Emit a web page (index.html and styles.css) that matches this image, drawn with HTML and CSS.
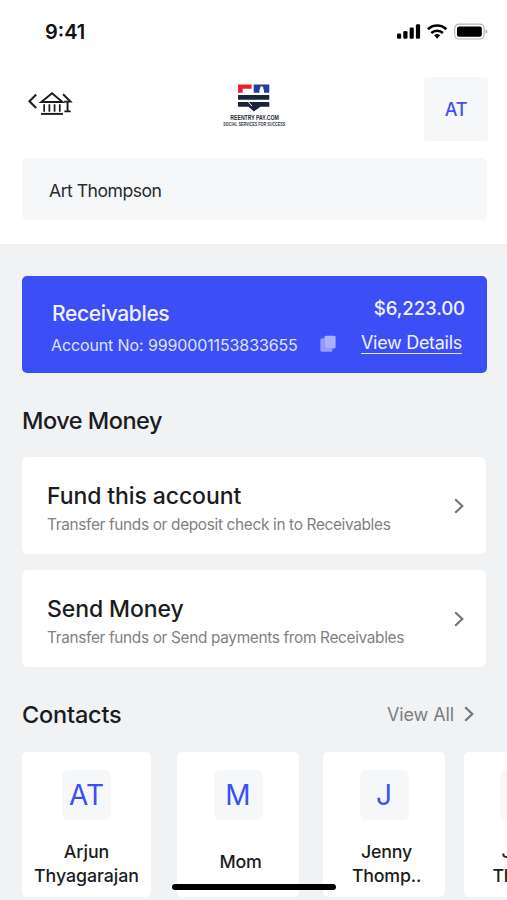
FILE: index.html
```html
<!DOCTYPE html>
<html lang="en">
<head>
<meta charset="utf-8">
<title>Reentry Pay</title>
<link rel="stylesheet" href="styles.css">
</head>
<body>
<div class="screen">
  <header class="top">
    <div class="status">
      <span class="time">9:41</span>
      <svg class="status-icons" width="92" height="20" viewBox="0 0 92 20">
        <rect x="0" y="11.5" width="4.2" height="5.2" rx="1.3"/>
        <rect x="6.3" y="9" width="4.2" height="7.7" rx="1.3"/>
        <rect x="12.6" y="5.5" width="4.2" height="11.2" rx="1.3"/>
        <rect x="18.9" y="2.2" width="4.2" height="14.5" rx="1.3"/>
        <g fill="none" stroke="#000" stroke-width="2.6">
          <path d="M30.9 7.2a13.2 13.2 0 0 1 18.4 0"/>
          <path d="M34.3 11a8.4 8.4 0 0 1 11.6 0"/>
        </g>
        <path d="M37 13.3a4.8 4.8 0 0 1 6.2 0l-3.1 3.5z"/>
        <rect x="57.7" y="2.2" width="29.4" height="14.8" rx="4.2" fill="none" stroke="#b5b5b5" stroke-width="1.2"/>
        <rect x="60" y="4.5" width="24.8" height="10.2" rx="2"/>
        <path d="M88.6 7.3c2.2.8 2.2 3.8 0 4.6z" fill="#a5a5a5"/>
      </svg>
    </div>
    <div class="nav">
      <svg class="bank" width="47" height="27" viewBox="0 0 46 26" fill="none" stroke="#1c1c1c" stroke-width="1.7">
        <path d="M9 3.3 2.4 9.8 9 16.5" stroke-width="2"/>
        <path d="M14 10.6 24.5 2 34.7 10.6z" stroke-width="1.9"/>
        <path d="M16.8 12.8v7.2M21.9 12.8v7.2M27 12.8v7.2M32.1 12.8v7.2"/>
        <path d="M13.7 22.2h21.5" stroke-width="1.9"/>
        <path d="M35.3 3l7.2 7.2H36.3M39.7 10.2v9.2M36.6 19.7h6.2" stroke-width="1.9"/>
      </svg>
      <svg class="logo" width="68" height="48" viewBox="0 0 68 48">
        <path fill="#e5242b" d="M18 3.4h13.6v4.4h-8.9v4H18z"/>
        <path fill="#22409a" d="M33.7 3.4h15.6v8.4H44V9.5a2.3 2.3 0 1 0-4.6 0v2.3h-5.7z"/>
        <circle cx="41.7" cy="7" r="1.7" fill="#fff"/>
        <path fill="#1b2437" d="M18 14.1h31.3v4.7H18zM18 21.1h31.3v4.7H40.5L33.9 30.4 28.6 25.8H18z"/>
        <path d="M28.5 21.2 32 25" stroke="#fff" stroke-width="1"/>
        <text class="logo-name" x="10.3" y="39.2" textLength="48.4" lengthAdjust="spacingAndGlyphs">REENTRY PAY.COM</text>
        <text class="logo-tag" x="3.3" y="45.2" textLength="62" lengthAdjust="spacingAndGlyphs">SOCIAL SERVICES FOR SUCCESS</text>
      </svg>
      <div class="profile">AT</div>
    </div>
    <div class="holder">Art Thompson</div>
  </header>

  <main class="content">
    <section class="account">
      <div class="account-row">
        <span class="account-name">Receivables</span>
        <span class="amount">$6,223.00</span>
      </div>
      <div class="account-row second">
        <span class="number">Account No: 9990001153833655</span>
        <svg class="copy" width="16" height="18" viewBox="0 0 16 18">
          <path fill="#949cfc" d="M2 3.2h2.4v10h8.2v2a1.6 1.6 0 0 1-1.6 1.6H2A1.6 1.6 0 0 1 .4 15.2V4.8A1.6 1.6 0 0 1 2 3.2z"/>
          <rect x="4.4" y=".7" width="11.2" height="12.7" rx="1.5" fill="#abb1fd"/>
        </svg>
        <span class="details">View Details</span>
      </div>
    </section>

    <h2 class="heading money-heading">Move Money</h2>
    <section class="action">
      <div class="action-copy">
        <h3 class="action-title">Fund this account</h3>
        <p class="action-sub">Transfer funds or deposit check in to Receivables</p>
      </div>
      <svg class="chevron" width="10" height="16" viewBox="0 0 10 16"><path d="M1.2 1.2 8.3 8 1.2 14.8"/></svg>
    </section>
    <section class="action">
      <div class="action-copy">
        <h3 class="action-title">Send Money</h3>
        <p class="action-sub">Transfer funds or Send payments from Receivables</p>
      </div>
      <svg class="chevron" width="10" height="16" viewBox="0 0 10 16"><path d="M1.2 1.2 8.3 8 1.2 14.8"/></svg>
    </section>

    <div class="contacts-head">
      <h2 class="heading contacts-heading">Contacts</h2>
      <div class="view-all"><span>View All</span>
        <svg class="chevron" width="10" height="16" viewBox="0 0 10 16"><path d="M1.2 1.2 8.3 8 1.2 14.8"/></svg>
      </div>
    </div>
    <div class="contacts">
      <article class="contact wide"><div class="avatar">AT</div><div class="person">Arjun<br>Thyagarajan</div></article>
      <article class="contact"><div class="avatar">M</div><div class="person single">Mom</div></article>
      <article class="contact"><div class="avatar">J</div><div class="person">Jenny<br>Thomp..</div></article>
      <article class="contact"><div class="avatar">J</div><div class="person">Jenny<br>Thomp..</div></article>
    </div>
  </main>
  <div class="home-bar"></div>
</div>
</body>
</html>
```

FILE: styles.css
```css
* { box-sizing: border-box; }
body { margin: 0; font-family: Inter, "Liberation Sans", sans-serif; color: #1b1c1e; }
h2, h3, p { margin: 0; font-weight: 500; }
svg { display: block; flex: none; overflow: visible; }
.screen { position: relative; width: 507px; height: 900px; overflow: hidden; background: #f0f2f4; }
.top { height: 244px; padding: 0 20px 0 22px; background: #fff; }
.status { display: flex; justify-content: space-between; align-items: center; height: 64px; padding-left: 23px; }
.time { font-size: 20px; font-weight: 600; color: #111; }
.status-icons { margin: -1px -2px 0 0; }
.nav { display: flex; align-items: center; height: 64px; margin-top: 13px; }
.bank { margin: -10px 146px 0 5px; }
.logo { margin-top: -8px; }
.logo-name { font: 700 8px "Liberation Sans", sans-serif; fill: #252a35; }
.logo-tag { font: 700 5.6px "Liberation Sans", sans-serif; fill: #303541; }
.profile { display: flex; align-items: center; justify-content: center; width: 64px; height: 64px; margin-left: auto; margin-right: -1px; border-radius: 4px; background: #f5f7f9; color: #454ff0; font-size: 18px; font-weight: 500; letter-spacing: -0.3px; }
.holder { width: 465px; height: 62px; margin-top: 17px; padding-left: 27px; border-radius: 5px; background: #f5f7f9; font-size: 17.6px; letter-spacing: -0.5px; line-height: 66px; color: #292b2e; }
.content { padding: 32px 0 0 22px; }
.account { width: 465px; height: 97px; padding: 22px 22px 0 29px; border-radius: 5px; background: #3c4ff6; color: #f1f2ff; }
.account-row { display: flex; justify-content: space-between; height: 30px; }
.account-name { font-size: 21px; font-weight: 500; letter-spacing: -0.35px; line-height: 31px; padding-left: 1px; }
.amount { font-size: 18.6px; font-weight: 500; letter-spacing: -0.1px; line-height: 21px; }
.second { justify-content: flex-start; }
.number { width: 269px; font-size: 16px; letter-spacing: -0.12px; line-height: 34px; color: #dfe2ff; white-space: nowrap; }
.copy { margin: 7px 25px 0 0; }
.details { height: 26px; border-bottom: 1px solid #dfe2ff; font-size: 18px; letter-spacing: -0.3px; line-height: 29px; white-space: nowrap; }
.heading { font-size: 23.5px; letter-spacing: -0.5px; line-height: 32px; }
.money-heading { margin: 32px 0 20px; }
.action { display: flex; justify-content: space-between; align-items: center; width: 464px; height: 97px; margin-bottom: 16px; padding: 0 22px 0 25px; border-radius: 6px; background: #fff; }
.action-copy { margin-top: 7px; }
.action-title { font-size: 23px; letter-spacing: -0.1px; line-height: 31px; }
.action-sub { font-size: 15.4px; font-weight: 400; letter-spacing: -0.34px; line-height: 25px; color: #818181; white-space: nowrap; }
.chevron path { fill: none; stroke: #747679; stroke-width: 2.2; }
.contacts-head { display: flex; justify-content: space-between; align-items: center; height: 30px; margin-top: 32px; padding-right: 33px; }
.contacts-heading { letter-spacing: -0.2px; padding-top: 2px; }
.view-all { display: flex; align-items: center; gap: 10px; font-size: 18px; letter-spacing: -0.1px; color: #7b7d80; }
.contacts { display: flex; width: 640px; margin-top: 23px; }
.contact { flex: none; width: 122px; height: 145px; margin-right: 18.5px; padding-top: 18px; border-radius: 5px; background: #fff; text-align: center; }
.contact:nth-child(2) { margin-right: 24px; }
.wide { width: 129px; margin-right: 26px; }
.avatar { display: flex; align-items: center; justify-content: center; width: 49px; height: 50px; margin: 0 auto; border-radius: 6px; background: #f5f7f9; color: #3c4ff6; font-size: 28px; }
.person { display: flex; flex-direction: column; align-items: center; justify-content: center; height: 48px; margin-top: 19px; padding: 1px 0 0 5px; font-size: 17.8px; font-weight: 500; letter-spacing: -0.2px; line-height: 24px; }
.person.single { padding: 0 0 2px 5px; }
.wide .person { padding-left: 0; letter-spacing: -0.05px; }
.home-bar { position: absolute; left: 172px; top: 884px; width: 164px; height: 6px; border-radius: 3px; background: #000; }
```
